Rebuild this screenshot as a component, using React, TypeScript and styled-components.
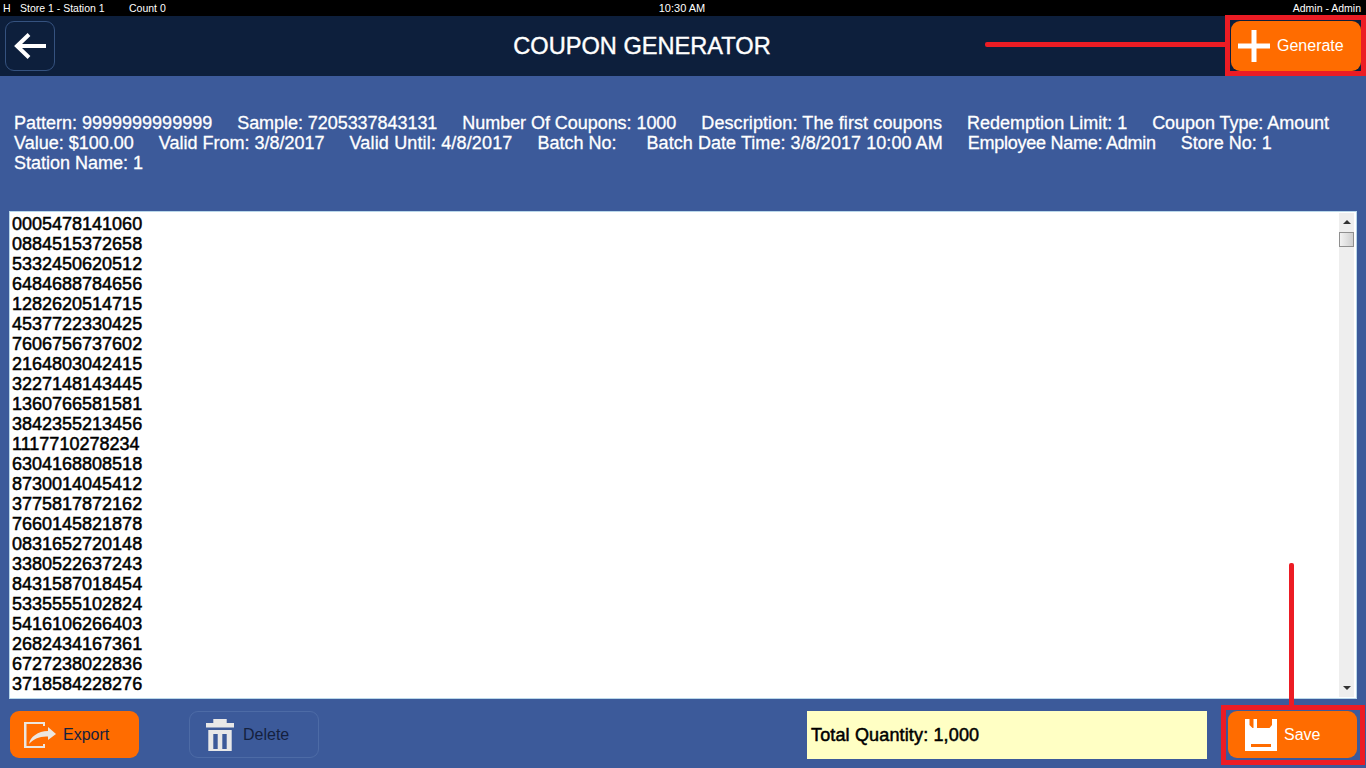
import React from 'react';
import styled, { createGlobalStyle } from 'styled-components';

const GlobalStyle = createGlobalStyle`
  html, body {
    margin: 0;
    padding: 0;
    background: #3c5a9a;
    overflow: hidden;
  }
  * {
    box-sizing: border-box;
  }
`;

const Page = styled.div`
  width: 1366px;
  height: 768px;
  display: flex;
  flex-direction: column;
  background: #3c5a9a;
  font-family: 'Liberation Sans', Arial, sans-serif;
`;

const StatusBar = styled.div`
  height: 16px;
  flex-shrink: 0;
  display: grid;
  grid-template-columns: 1fr auto 1fr;
  align-items: center;
  padding: 0 5px 0 3px;
  background: #000;
  color: #fff;
  font-size: 10.5px;
  line-height: 16px;
`;

const StatusLeft = styled.div`
  display: flex;
`;

const StatusItem = styled.span<{ $width: number }>`
  width: ${(p) => p.$width}px;
`;

const StatusClock = styled.span`
  font-size: 11px;
`;

const StatusRight = styled.div`
  text-align: right;
`;

const Header = styled.header`
  height: 60px;
  flex-shrink: 0;
  display: flex;
  align-items: center;
  justify-content: space-between;
  padding: 0 5px;
  background: #0d1f3c;
`;

const BackButton = styled.button`
  width: 50px;
  height: 50px;
  padding: 0;
  display: flex;
  align-items: center;
  justify-content: center;
  background: transparent;
  border: 1px solid #35527f;
  border-radius: 9px;
`;

const Title = styled.h1`
  margin: 0 0 0 -2px;
  color: #fff;
  font-size: 23.6px;
  font-weight: 400;
  -webkit-text-stroke: 0.4px #fff;
`;

const ActionButton = styled.button<{
  $light?: boolean;
  $ghost?: boolean;
  $tall?: boolean;
  $width?: number;
  $inset: number;
  $gap?: number;
}>`
  position: relative;
  width: ${(p) => p.$width ?? 130}px;
  height: ${(p) => (p.$tall ? 50 : 47)}px;
  padding: 0 0 0 ${(p) => p.$inset}px;
  display: flex;
  align-items: center;
  gap: ${(p) => p.$gap ?? 7}px;
  font-family: inherit;
  font-size: 16px;
  background: ${(p) => (p.$ghost ? 'transparent' : '#ff6c00')};
  color: ${(p) => (p.$light ? '#fff' : '#14213f')};
  border: 1px solid ${(p) => (p.$ghost ? '#4d6ba6' : 'transparent')};
  border-radius: 9px;
`;

const GenerateMarker = styled.span`
  position: absolute;
  top: -7px;
  left: -7px;
  right: -6px;
  bottom: -6px;
  border: 5px solid #ec1c24;
`;

const SaveMarker = styled.span`
  position: absolute;
  top: -7px;
  left: -8px;
  right: -9px;
  bottom: -8px;
  border: 5px solid #ec1c24;
`;

const GenerateCallout = styled.span`
  position: absolute;
  top: 20px;
  right: 135px;
  width: 240px;
  height: 5px;
  background: #ec1c24;
  border-radius: 2px 0 0 2px;
`;

const SaveCallout = styled.span`
  position: absolute;
  left: 60px;
  bottom: 52px;
  width: 5px;
  height: 142px;
  background: #ec1c24;
  border-radius: 2px 2px 0 0;
`;

const InfoPanel = styled.section`
  height: 135px;
  flex-shrink: 0;
  padding: 37px 14px 0;
  display: flex;
  flex-wrap: wrap;
  align-content: flex-start;
  column-gap: 25px;
  color: #fff;
  font-size: 18px;
  line-height: 20px;
  -webkit-text-stroke: 0.3px #fff;
`;

const InfoField = styled.span<{ $tracking?: number }>`
  white-space: pre;
  letter-spacing: ${(p) => p.$tracking ?? 0}px;
`;

const ListBox = styled.div`
  height: 488px;
  flex-shrink: 0;
  margin: 0 9px;
  padding: 1px 2px 1px 0;
  display: flex;
  background: #fff;
  border: 1px solid #b9d7ea;
  overflow: hidden;
`;

const CodeList = styled.div`
  flex: 1;
  padding: 1px 0 0 2px;
  overflow: hidden;
`;

const CodeRow = styled.div`
  height: 20px;
  line-height: 20px;
  font-size: 18px;
  color: #000;
  -webkit-text-stroke: 0.5px #000;
`;

const ScrollTrack = styled.div`
  width: 15px;
  display: flex;
  flex-direction: column;
  align-items: center;
  background: #eee;
`;

const ScrollArrow = styled.div<{ $down?: boolean }>`
  height: 18px;
  display: flex;
  align-items: center;
  justify-content: center;
  &::before {
    content: '';
    border-left: 4px solid transparent;
    border-right: 4px solid transparent;
    ${(p) => (p.$down ? 'border-top: 4px solid #333;' : 'border-bottom: 4px solid #333;')}
  }
`;

const ScrollThumb = styled.div`
  width: 15px;
  height: 15px;
  margin-top: 1px;
  border: 1px solid #8f8f8f;
  background: linear-gradient(90deg, #f2f2f2, #cfcfcf);
`;

const ScrollSpacer = styled.div`
  flex: 1;
`;

const Footer = styled.footer`
  flex: 1;
  display: flex;
  align-items: flex-start;
  padding: 12px 0 0 10px;
`;

const DeleteSlot = styled.div`
  margin-left: 50px;
`;

const TotalBox = styled.div`
  width: 400px;
  height: 48px;
  margin-left: 488px;
  padding-left: 4px;
  display: flex;
  align-items: center;
  background: #ffffc4;
  color: #000;
  font-size: 18px;
  letter-spacing: 0.15px;
  -webkit-text-stroke: 0.5px #000;
`;

const SaveSlot = styled.div`
  margin-left: 21px;
`;

const ArrowLeftIcon = () => (
  <svg width="32" height="26" viewBox="0 0 32 26" fill="none" stroke="#fff" strokeWidth="4">
    <path d="M32 13H4M15 1.5L3 13l12 11.5" />
  </svg>
);

const PlusIcon = () => (
  <svg width="32" height="32" viewBox="0 0 32 32" fill="#fff">
    <rect x="13.5" y="0" width="5" height="32" />
    <rect x="0" y="13.5" width="32" height="5" />
  </svg>
);

const ExportIcon = () => (
  <svg width="32" height="26" viewBox="0 0 32 26" fill="#ece6df">
    <path d="M0 0h21v4h-2V2H2.5v22H19v-2h2v4H0z" />
    <path d="M5 22C6 15 14 9 24 9V5l8 7-8 6v-3.5C16 14 9 17 5 22z" />
  </svg>
);

const TrashIcon = () => (
  <svg width="28" height="32" viewBox="0 0 28 32" fill="#e8e8e8">
    <path d="M7.3 0h13.4v4H28v4.5H0V4h7.3z" />
    <path d="M2.3 11h23.4v21H2.3zM7.3 15v15h4.4V15zM16.3 15v15h4.4V15z" fillRule="evenodd" />
  </svg>
);

const SaveIcon = () => (
  <svg width="32" height="32" viewBox="0 0 32 32" fill="#fff">
    <path
      d="M0 0h4.5v6l3 3h17l2.5-3V0H32v32H0zM6 25v3h20v-3z"
      fillRule="evenodd"
    />
    <rect x="8.5" y="0" width="3.5" height="9" />
  </svg>
);

const infoFields: { text: string; tracking?: number }[] = [
  { text: 'Pattern: 9999999999999' },
  { text: 'Sample: 7205337843131', tracking: -0.05 },
  { text: 'Number Of Coupons: 1000', tracking: -0.05 },
  { text: 'Description: The first coupons', tracking: 0.1 },
  { text: 'Redemption Limit: 1' },
  { text: 'Coupon Type: Amount', tracking: -0.05 },
  { text: 'Value: $100.00' },
  { text: 'Valid From: 3/8/2017' },
  { text: 'Valid Until: 4/8/2017', tracking: 0.15 },
  { text: 'Batch No: ' },
  { text: 'Batch Date Time: 3/8/2017 10:00 AM', tracking: 0.06 },
  { text: 'Employee Name: Admin', tracking: -0.25 },
  { text: 'Store No: 1' },
  { text: 'Station Name: 1' },
];

const codes = [
  '0005478141060', '0884515372658', '5332450620512', '6484688784656', '1282620514715',
  '4537722330425', '7606756737602', '2164803042415', '3227148143445', '1360766581581',
  '3842355213456', '1117710278234', '6304168808518', '8730014045412', '3775817872162',
  '7660145821878', '0831652720148', '3380522637243', '8431587018454', '5335555102824',
  '5416106266403', '2682434167361', '6727238022836', '3718584228276',
];

export default function App() {
  return (
    <Page>
      <GlobalStyle />
      <StatusBar>
        <StatusLeft>
          <StatusItem $width={17}>H</StatusItem>
          <StatusItem $width={109}>Store 1 - Station 1</StatusItem>
          <StatusItem $width={60}>Count 0</StatusItem>
        </StatusLeft>
        <StatusClock>10:30 AM</StatusClock>
        <StatusRight>Admin - Admin</StatusRight>
      </StatusBar>

      <Header>
        <BackButton>
          <ArrowLeftIcon />
        </BackButton>
        <Title>COUPON GENERATOR</Title>
        <ActionButton $light $tall $inset={6}>
          <GenerateCallout />
          <GenerateMarker />
          <PlusIcon />
          Generate
        </ActionButton>
      </Header>

      <InfoPanel>
        {infoFields.map((field) => (
          <InfoField key={field.text} $tracking={field.tracking}>
            {field.text}
          </InfoField>
        ))}
      </InfoPanel>

      <ListBox>
        <CodeList>
          {codes.map((code) => (
            <CodeRow key={code}>{code}</CodeRow>
          ))}
        </CodeList>
        <ScrollTrack>
          <ScrollArrow />
          <ScrollThumb />
          <ScrollSpacer />
          <ScrollArrow $down />
        </ScrollTrack>
      </ListBox>

      <Footer>
        <ActionButton $width={129} $inset={13}>
          <ExportIcon />
          Export
        </ActionButton>
        <DeleteSlot>
          <ActionButton $ghost $inset={16} $gap={9}>
            <TrashIcon />
            Delete
          </ActionButton>
        </DeleteSlot>
        <TotalBox>Total Quantity: 1,000</TotalBox>
        <SaveSlot>
          <ActionButton $light $width={129} $inset={16}>
            <SaveCallout />
            <SaveMarker />
            <SaveIcon />
            Save
          </ActionButton>
        </SaveSlot>
      </Footer>
    </Page>
  );
}
